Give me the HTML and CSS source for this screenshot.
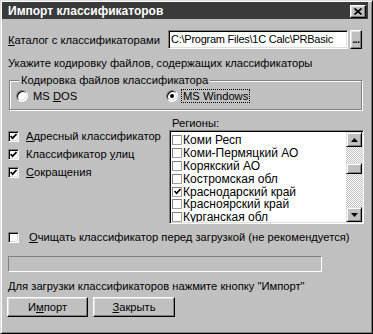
FILE: index.html
```html
<!DOCTYPE html>
<html>
<head>
<meta charset="utf-8">
<link rel="stylesheet" href="styles.css">
</head>
<body>
<div class="window">
  <div class="titlebar">
    <span class="title">Импорт классификаторов</span>
    <span class="close"><svg width="8" height="7" viewBox="0 0 8 7"><path d="M0.5 0.5 L7.5 6.5 M7.5 0.5 L0.5 6.5" stroke="#000" stroke-width="1.7" fill="none"/></svg></span>
  </div>
  <div class="content">
    <div class="path-row">
      <span class="path-label"><u>К</u>аталог с классификаторами</span>
      <span class="input">C:\Program Files\1C Calc\PRBasic</span>
      <span class="btn dots">...</span>
    </div>
    <div class="hint">Укажите кодировку файлов, содержащих классификаторы</div>
    <fieldset class="group">
      <legend>Кодировка файлов классификатора</legend>
      <div class="radio-row">
        <span class="radio-item first"><span class="radio"></span><span class="radio-text">MS <u>D</u>OS</span></span>
        <span class="radio-item"><span class="radio checked"></span><span class="radio-text focus">MS Windows</span></span>
      </div>
    </fieldset>
    <div class="split">
      <div class="checks">
        <div class="check-row"><span class="cb"><svg width="7" height="7" viewBox="0 0 7 7"><path d="M0.6 3 L2.6 5.2 L6.5 1" stroke="#000" stroke-width="1.7" fill="none"/></svg></span><span><u>А</u>дресный классификатор</span></div>
        <div class="check-row"><span class="cb"><svg width="7" height="7" viewBox="0 0 7 7"><path d="M0.6 3 L2.6 5.2 L6.5 1" stroke="#000" stroke-width="1.7" fill="none"/></svg></span><span>Классификатор <u>у</u>лиц</span></div>
        <div class="check-row"><span class="cb"><svg width="7" height="7" viewBox="0 0 7 7"><path d="M0.6 3 L2.6 5.2 L6.5 1" stroke="#000" stroke-width="1.7" fill="none"/></svg></span><span><u>С</u>окращения</span></div>
      </div>
      <div class="regions">
        <div class="reg-label">Регионы:</div>
        <div class="listbox">
          <div class="items">
            <div class="item"><span class="lcb"></span>Коми Респ</div>
            <div class="item"><span class="lcb"></span>Коми-Пермяцкий АО</div>
            <div class="item"><span class="lcb"></span>Корякский АО</div>
            <div class="item"><span class="lcb"></span>Костромская обл</div>
            <div class="item"><span class="lcb"><svg width="7" height="7" viewBox="0 0 7 7"><path d="M0.6 3 L2.6 5.2 L6.5 1" stroke="#000" stroke-width="1.6" fill="none"/></svg></span>Краснодарский край</div>
            <div class="item"><span class="lcb"></span>Красноярский край</div>
            <div class="item"><span class="lcb"></span>Курганская обл</div>
          </div>
          <div class="scrollbar">
            <span class="sbtn"><svg width="7" height="4" viewBox="0 0 7 4"><path d="M3.5 0 L7 4 L0 4 Z" fill="#000"/></svg></span>
            <div class="track"><span class="thumb"></span></div>
            <span class="sbtn"><svg width="7" height="4" viewBox="0 0 7 4"><path d="M0 0 L7 0 L3.5 4 Z" fill="#000"/></svg></span>
          </div>
        </div>
      </div>
    </div>
    <div class="check-row clear"><span class="cb"></span><span><u>О</u>чищать классификатор перед загрузкой (не рекомендуется)</span></div>
    <div class="progress"></div>
    <div class="status">Для загрузки классификаторов нажмите кнопку "Импорт"</div>
    <div class="buttons">
      <span class="btn action">И<u>м</u>порт</span>
      <span class="btn action wide"><u>З</u>акрыть</span>
    </div>
  </div>
</div>
</body>
</html>
```

FILE: styles.css
```css
* { box-sizing: border-box; }
html, body { margin: 0; padding: 0; }
body {
  width: 373px;
  height: 334px;
  overflow: hidden;
  background: #c0c0c0;
  font-family: "Liberation Sans", Arial, sans-serif;
  font-size: 11.2px;
  color: #000;
}
u { text-decoration: underline; text-underline-offset: 1px; }

.window {
  width: 373px;
  height: 334px;
  border: 1px solid;
  border-color: #dfdfdf #000 #000 #dfdfdf;
  box-shadow: inset 1px 1px #fff, inset -1px -1px #808080;
  padding: 1px 4px 2px 1px;
  background: #c0c0c0;
}

.titlebar {
  height: 17px;
  background: #3a3a3a;
  display: flex;
  align-items: center;
  justify-content: space-between;
  padding: 0 2px 0 6px;
}
.title {
  color: #fff;
  font-weight: bold;
  font-size: 12px;
}
.close {
  width: 16px;
  height: 13px;
  margin-top: 1px;
  display: flex;
  align-items: center;
  justify-content: center;
  background: #c0c0c0;
  border: 1px solid;
  border-color: #fff #000 #000 #fff;
  box-shadow: inset -1px -1px #808080, inset 1px 1px #dfdfdf;
}

.content {
  padding: 0 0 0 6px;
}

.path-row {
  margin-top: 11px;
  height: 19px;
  display: flex;
  align-items: center;
}
.path-label { width: 160px; }
.input {
  width: 180px;
  height: 19px;
  background: #fff;
  border: 1px solid;
  border-color: #808080 #fff #fff #808080;
  box-shadow: inset 1px 1px #000, inset -1px -1px #dfdfdf;
  padding: 0 0 0 2px;
  line-height: 17px;
  font-size: 11px;
  letter-spacing: -0.25px;
  white-space: nowrap;
  overflow: hidden;
}
.btn {
  display: flex;
  align-items: center;
  justify-content: center;
  background: #c0c0c0;
  border: 1px solid;
  border-color: #fff #000 #000 #fff;
  box-shadow: inset -1px -1px #808080, inset 1px 1px #dfdfdf;
}
.dots {
  width: 12px;
  height: 19px;
  margin-left: 2px;
  font-weight: bold;
  font-size: 10px;
  align-items: flex-end;
  padding-bottom: 3px;
  letter-spacing: -0.5px;
}

.hint {
  margin-top: 7px;
  line-height: 14px;
}

.group {
  margin: 3px 0 0 1px;
  width: 353px;
  padding: 0 0 0 6px;
  border: 1px solid #808080;
  box-shadow: inset 1px 1px #fff, 1px 1px #fff;
}
.group legend {
  margin-left: 3px;
  padding: 0 2px;
  line-height: 14px;
  background: #c0c0c0;
}
.radio-row {
  margin-top: 3px;
  margin-bottom: 7px;
  height: 12px;
  display: flex;
  align-items: center;
}
.radio-item {
  display: flex;
  align-items: center;
}
.radio-item.first { width: 150px; }
.radio {
  width: 12px;
  height: 12px;
  border-radius: 50%;
  background: #fff;
  border: 1px solid;
  border-color: #808080 #fff #fff #808080;
  box-shadow: inset 1px 1px #000, inset -1px -1px #dfdfdf;
  display: flex;
  align-items: center;
  justify-content: center;
}
.radio.checked::after {
  content: "";
  width: 4px;
  height: 4px;
  border-radius: 50%;
  background: #000;
}
.radio-text {
  margin-left: 4px;
  padding: 0 1px;
  line-height: 12px;
}
.radio-text.focus { outline: 1px dotted #000; }

.split {
  display: flex;
  height: 114px;
}
.checks {
  width: 161px;
  padding-top: 17px;
}
.check-row {
  height: 18px;
  display: flex;
  align-items: center;
}
.cb {
  width: 11px;
  height: 11px;
  flex: none;
  margin-right: 7px;
  background: #fff;
  border: 1px solid;
  border-color: #808080 #fff #fff #808080;
  box-shadow: inset 1px 1px #000, inset -1px -1px #dfdfdf;
  display: flex;
  align-items: center;
  justify-content: center;
}

.regions { width: 195px; }
.reg-label {
  margin-top: 6px;
  padding-left: 3px;
  line-height: 14px;
}
.listbox {
  height: 94px;
  display: flex;
  background: #fff;
  border: 1px solid;
  border-color: #808080 #fff #fff #808080;
  box-shadow: inset 1px 1px #000, inset -1px -1px #dfdfdf;
  padding: 1px;
}
.items {
  flex: 1;
  padding-top: 2px;
  overflow: hidden;
}
.item {
  height: 12.8px;
  display: flex;
  align-items: center;
  padding-left: 1px;
  font-size: 12px;
  white-space: nowrap;
}
.lcb {
  width: 10px;
  height: 10px;
  flex: none;
  margin-right: 1px;
  border: 1px solid #808080;
  border-right-color: #a0a0a0;
  border-bottom-color: #a0a0a0;
  display: flex;
  align-items: center;
  justify-content: center;
}
.scrollbar {
  width: 16px;
  display: flex;
  flex-direction: column;
}
.sbtn {
  height: 15px;
  flex: none;
  display: flex;
  align-items: center;
  justify-content: center;
  background: #c0c0c0;
  border: 1px solid;
  border-color: #dfdfdf #000 #000 #dfdfdf;
  box-shadow: inset 1px 1px #fff, inset -1px -1px #808080;
}
.track {
  flex: 1;
  background: repeating-conic-gradient(#c0c0c0 0 25%, #fff 0 50%) 0 0 / 2px 2px;
}
.thumb {
  display: block;
  height: 11px;
  margin-top: 16px;
  background: #c0c0c0;
  border: 1px solid;
  border-color: #dfdfdf #000 #000 #dfdfdf;
  box-shadow: inset 1px 1px #fff, inset -1px -1px #808080;
}

.check-row.clear {
  margin-top: 6px;
  height: 14px;
}
.check-row.clear .cb { margin-right: 10px; }

.progress {
  margin-top: 12px;
  width: 314px;
  height: 16px;
  border: 1px solid;
  border-color: #808080 #fff #fff #808080;
}
.status {
  margin-top: 7px;
  line-height: 14px;
}
.buttons {
  margin-top: 4px;
  margin-left: -1px;
  display: flex;
  gap: 5px;
}
.action {
  width: 81px;
  height: 20px;
}
.action.wide { width: 82px; }
```
